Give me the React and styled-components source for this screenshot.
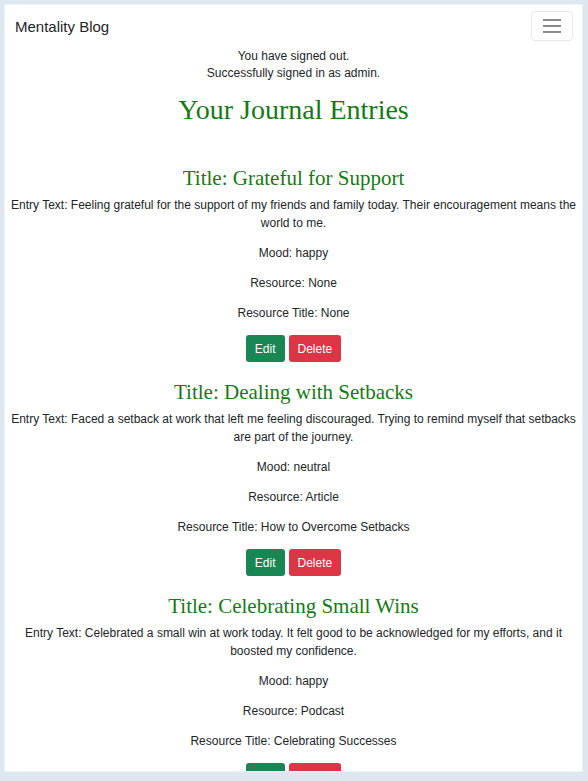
import React from "react";
import styled, { createGlobalStyle } from "styled-components";

const GlobalStyle = createGlobalStyle`
  html, body {
    margin: 0;
    padding: 0;
    background: #dce7ef;
  }
  body {
    font-family: "Liberation Sans", Arial, sans-serif;
    color: #212529;
  }
`;

const Frame = styled.div`
  padding: 4px 5px 0 4px;
`;

const Panel = styled.div`
  background: #fff;
  border: 1px solid #edf2f6;
  height: 768px;
  overflow: hidden;
  box-sizing: border-box;
`;

const Navbar = styled.nav`
  display: flex;
  align-items: center;
  justify-content: space-between;
  padding: 6px 9px 7px 10px;
`;

const Brand = styled.a`
  font-size: 15px;
  color: #212529;
  text-decoration: none;
`;

const Toggler = styled.button`
  width: 42px;
  height: 30px;
  background: #fff;
  border: 1px solid #e6e6e6;
  border-radius: 4px;
  display: flex;
  align-items: center;
  justify-content: center;
  padding: 0;
`;

const Flash = styled.div`
  text-align: center;
  font-size: 12px;
  line-height: 17px;
`;

const PageTitle = styled.h1`
  font-family: "Liberation Serif", Georgia, serif;
  font-weight: normal;
  color: #157a15;
  text-align: center;
  font-size: 28px;
  line-height: 31px;
  margin: 12px 0 41px;
`;

const Entry = styled.section`
  text-align: center;
  padding: 0 5px;
  margin-bottom: 18px;
`;

const EntryTitle = styled.h2`
  font-family: "Liberation Serif", Georgia, serif;
  font-weight: normal;
  color: #157a15;
  font-size: 21px;
  line-height: 24px;
  margin: 0 0 6px;
`;

const Text = styled.p`
  font-size: 12px;
  line-height: 18px;
  margin: 0 0 12px;
`;

const Actions = styled.div`
  display: flex;
  justify-content: center;
  gap: 4px;
  margin-top: 13px;
`;

const Button = styled.button`
  font-family: "Liberation Sans", Arial, sans-serif;
  font-size: 12px;
  height: 27px;
  padding: 0 9px;
  border: none;
  border-radius: 3px;
  color: #fff;
  background: ${(p) => (p.$variant === "danger" ? "#dc3545" : "#198754")};
`;

const entries = [
  {
    title: "Grateful for Support",
    text: "Feeling grateful for the support of my friends and family today. Their encouragement means the world to me.",
    mood: "happy",
    resource: "None",
    resourceTitle: "None",
  },
  {
    title: "Dealing with Setbacks",
    text: "Faced a setback at work that left me feeling discouraged. Trying to remind myself that setbacks are part of the journey.",
    mood: "neutral",
    resource: "Article",
    resourceTitle: "How to Overcome Setbacks",
  },
  {
    title: "Celebrating Small Wins",
    text: "Celebrated a small win at work today. It felt good to be acknowledged for my efforts, and it boosted my confidence.",
    mood: "happy",
    resource: "Podcast",
    resourceTitle: "Celebrating Successes",
  },
];

function MenuIcon() {
  return (
    <svg width="20" height="16" viewBox="0 0 20 16">
      <g stroke="#8a8a8a" strokeWidth="2">
        <line x1="1" y1="2" x2="19" y2="2" />
        <line x1="1" y1="8" x2="19" y2="8" />
        <line x1="1" y1="14" x2="19" y2="14" />
      </g>
    </svg>
  );
}

export default function App() {
  return (
    <Frame>
      <GlobalStyle />
      <Panel>
        <Navbar>
          <Brand href="#">Mentality Blog</Brand>
          <Toggler aria-label="Toggle navigation">
            <MenuIcon />
          </Toggler>
        </Navbar>
        <Flash>
          <div>You have signed out.</div>
          <div>Successfully signed in as admin.</div>
        </Flash>
        <PageTitle>Your Journal Entries</PageTitle>
        {entries.map((e) => (
          <Entry key={e.title}>
            <EntryTitle>Title: {e.title}</EntryTitle>
            <Text>Entry Text: {e.text}</Text>
            <Text>Mood: {e.mood}</Text>
            <Text>Resource: {e.resource}</Text>
            <Text>Resource Title: {e.resourceTitle}</Text>
            <Actions>
              <Button>Edit</Button>
              <Button $variant="danger">Delete</Button>
            </Actions>
          </Entry>
        ))}
      </Panel>
    </Frame>
  );
}
